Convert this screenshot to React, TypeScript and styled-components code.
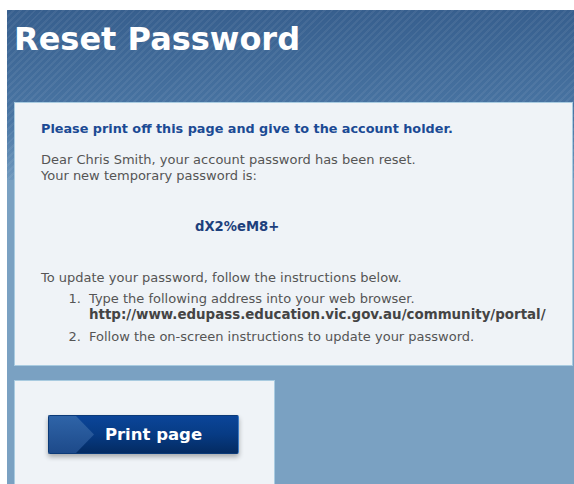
import styled, { createGlobalStyle } from "styled-components";

const GlobalStyle = createGlobalStyle`
  html, body {
    margin: 0;
    padding: 0;
    background: #ffffff;
  }
  body {
    font-family: "DejaVu Sans", Verdana, sans-serif;
  }
`;

// Striped blue band on top, fading into the flat page colour
const Frame = styled.div`
  margin: 10px 0 0 7px;
  min-height: 474px;
  background-color: #7aa1c2;
  background-image: repeating-linear-gradient(
      -45deg,
      rgba(255, 255, 255, 0.06) 0px,
      rgba(255, 255, 255, 0.06) 2px,
      rgba(0, 0, 0, 0) 2px,
      rgba(0, 0, 0, 0) 5px
    ),
    linear-gradient(#375f8e 0px, #4a76a4 110px, #6f98bd 170px);
  background-size: 100% 170px, 100% 170px;
  background-repeat: no-repeat;
  display: flex;
  flex-direction: column;
  padding: 0 1px 0 7px;
`;

const Title = styled.h1`
  margin: 0;
  padding: 10px 0 0 0;
  height: 92px;
  box-sizing: border-box;
  font-size: 32px;
  font-weight: bold;
  color: #ffffff;
`;

const Panel = styled.div<{ $width?: number; $height: number }>`
  box-sizing: border-box;
  width: ${(p) => (p.$width ? `${p.$width}px` : "auto")};
  height: ${(p) => p.$height}px;
  background: #eff3f7;
  border: 1px solid #a9cbe0;
`;

const Letter = styled(Panel)`
  padding: 18px 0 0 26px;
  font-size: 13px;
  line-height: 16px;
  color: #555555;
`;

const Notice = styled.p`
  margin: 0 0 15px 0;
  font-size: 12.8px;
  font-weight: bold;
  color: #1b4a94;
`;

const Para = styled.p`
  margin: 0;
`;

const TempPassword = styled.div`
  margin: 35px 0 35px 154px;
  font-size: 13.2px;
  font-weight: bold;
  color: #1d3f7c;
`;

const Steps = styled.ol`
  margin: 5px 0 0 0;
  padding: 0 0 0 44px;
  li {
    padding-left: 4px;
    margin-bottom: 6px;
  }
`;

const Url = styled.span`
  display: block;
  font-size: 13.4px;
  font-weight: bold;
  color: #444444;
`;

const ActionPanel = styled(Panel)`
  margin-top: 14px;
  display: flex;
  align-items: flex-start;
  padding: 34px 0 0 33px;
`;

const PrintButton = styled.button`
  position: relative;
  width: 191px;
  height: 39px;
  border: 1px solid #0b3a78;
  border-right-color: #3d7cc4;
  border-radius: 2px;
  background: linear-gradient(#0b4599 0%, #073b84 50%, #042b62 100%);
  box-shadow: 0 3px 5px rgba(0, 0, 0, 0.3);
  color: #ffffff;
  font-family: "DejaVu Sans", Verdana, sans-serif;
  font-size: 16.5px;
  font-weight: bold;
  cursor: pointer;
  padding: 0 0 0 20px;
  overflow: hidden;

  &::before {
    content: "";
    position: absolute;
    left: 0;
    top: 0;
    bottom: 0;
    width: 45px;
    background: linear-gradient(#2f64a8, #1d4a8a);
    clip-path: polygon(0 0, 60% 0, 100% 50%, 60% 100%, 0 100%);
  }

  span {
    position: relative;
  }
`;

export default function App() {
  return (
    <>
      <GlobalStyle />
      <Frame>
        <Title>Reset Password</Title>

        {/* Reset details for the account holder */}
        <Letter $height={264}>
          <Notice>Please print off this page and give to the account holder.</Notice>
          <Para>Dear Chris Smith, your account password has been reset.</Para>
          <Para>Your new temporary password is:</Para>
          <TempPassword>dX2%eM8+</TempPassword>
          <Para>To update your password, follow the instructions below.</Para>
          <Steps>
            <li>
              Type the following address into your web browser.
              <Url>http://www.edupass.education.vic.gov.au/community/portal/</Url>
            </li>
            <li>Follow the on-screen instructions to update your password.</li>
          </Steps>
        </Letter>

        <ActionPanel $width={261} $height={110}>
          <PrintButton onClick={() => window.print()}>
            <span>Print page</span>
          </PrintButton>
        </ActionPanel>
      </Frame>
    </>
  );
}
